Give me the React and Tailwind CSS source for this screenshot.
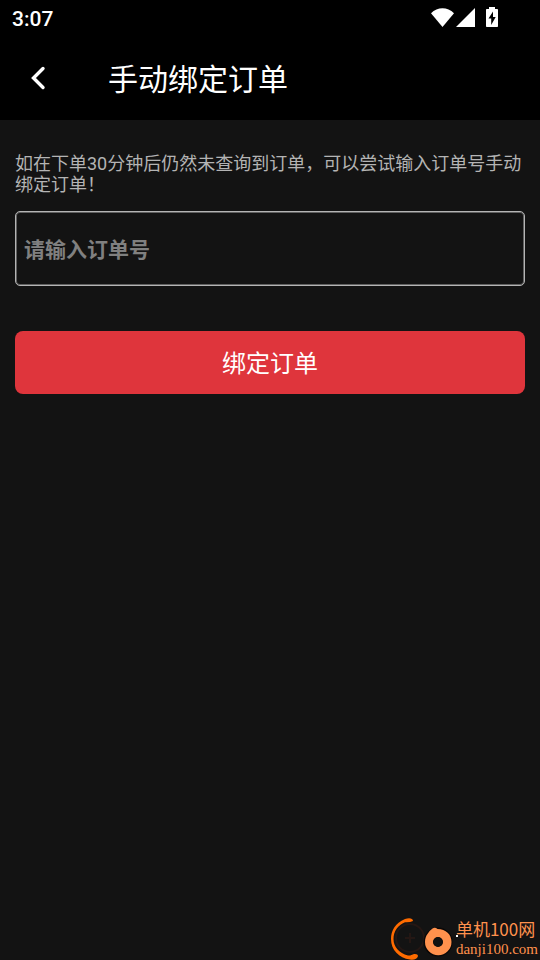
function StatusBar() {
  return (
    <div className="flex h-9 items-center justify-between pr-10 pl-3 text-white">
      <span className="pt-[2px] text-[21px] leading-9 font-medium">3:07</span>
      <svg width="70" height="24" viewBox="430 6 70 24" fill="currentColor" aria-hidden="true">
        <path d="M442.500 27 431 13.300C437.500 6.700 447.500 6.700 454 13.300Z" />
        <path d="M475 8v19h-19Z" />
        <path
          fillRule="evenodd"
          d="M489 7h6v2h2.200q.8 0 .8.800v16.400q0 .8-.8.800h-10.400q-.8 0-.8-.8V9.800q0-.8.800-.8H489ZM493 11.500 488.500 18.500h2.700v6.500l4.500-8h-2.700Z"
        />
      </svg>
    </div>
  );
}

function Header() {
  return (
    <header className="flex h-21 items-center gap-[57px] pb-px pl-[25px] text-white">
      <button type="button" aria-label="返回">
        <svg width="26" height="30" viewBox="0 0 26 30" fill="none" aria-hidden="true">
          <path d="M18 5.500 8.500 15 18 24.500" stroke="currentColor" strokeWidth="3.4" strokeLinecap="round" />
        </svg>
      </button>
      <h1 className="pt-1 text-[30px] leading-10">手动绑定订单</h1>
    </header>
  );
}

function Watermark() {
  return (
    <footer className="flex items-end justify-end pr-[2px] text-[#ff914d]">
      <svg width="66" height="43" viewBox="390 917 66 43" fill="none" overflow="visible" aria-hidden="true">
        <circle cx="410" cy="938" r="14" stroke="#241714" strokeWidth="2" />
        <path d="M410 933v10M405 938h10" stroke="#241714" strokeWidth="2" />
        <path
          fill="#ff6b00"
          d="M413 921C413 918 409 917.500 405 919C395 923 391 931 391 939C391 950 399 958 410 959.500Q413 960.500 416 958.800C419.500 956 418 953.500 414 954C412 955 410 955.800 408 955.500C399 953 393.500 947 393.500 939C393.500 931 398 925 405 922.200Q410 922.500 413 921Z"
        />
        <circle cx="438" cy="942" r="14.500" fill="#090707" />
        <path
          fill="currentColor"
          fillRule="evenodd"
          d="M432.500 928.500Q435 927 437.500 929C446 929 451.500 934.500 451.500 942A13.200 13.200 0 0 1 425 942C425 938.500 426 936 427.500 934Q429.500 930.500 432.500 928.500ZM438 937a5 5 0 1 0 0 10a5 5 0 1 0 0-10Z"
        />
        <circle cx="438" cy="942" r="4.500" fill="#111" />
        <path d="M457 935v2" stroke="#fff" strokeWidth="2" />
      </svg>
      <div>
        <div className="font-['Noto_Sans_CJK_SC',sans-serif] text-[17px] leading-5">单机100网</div>
        <div className="pb-px font-['Liberation_Serif',serif] text-[15px] leading-5">danji100.com</div>
      </div>
    </footer>
  );
}

export default function App() {
  return (
    <div className="flex min-h-screen flex-col bg-[#131313] font-[Roboto,'Noto_Sans_CJK_SC',sans-serif]">
      <div className="bg-black">
        <StatusBar />
        <Header />
      </div>
      <main className="flex-1 px-[15px] pt-[33px]">
        <form onSubmit={(event) => event.preventDefault()}>
          <label htmlFor="order" className="block text-[18px] leading-[21px] text-[#b4b4b4]">
            如在下单30分钟后仍然未查询到订单，可以尝试输入订单号手动绑定订单！
          </label>
          <input
            id="order"
            type="text"
            placeholder="请输入订单号"
            className="mt-4 block h-[75px] w-full rounded-[5px] border border-[#b4b4b4] bg-transparent px-2 pt-[3px] text-[21px] font-bold text-white inset-ring-1 inset-ring-[#606060] outline-none placeholder:text-[#808080]"
          />
          <button
            type="submit"
            className="mt-[45px] block h-[63px] w-full rounded-lg bg-[#df353c] pt-[2px] text-[24px] text-white"
          >
            绑定订单
          </button>
        </form>
      </main>
      <Watermark />
    </div>
  );
}
